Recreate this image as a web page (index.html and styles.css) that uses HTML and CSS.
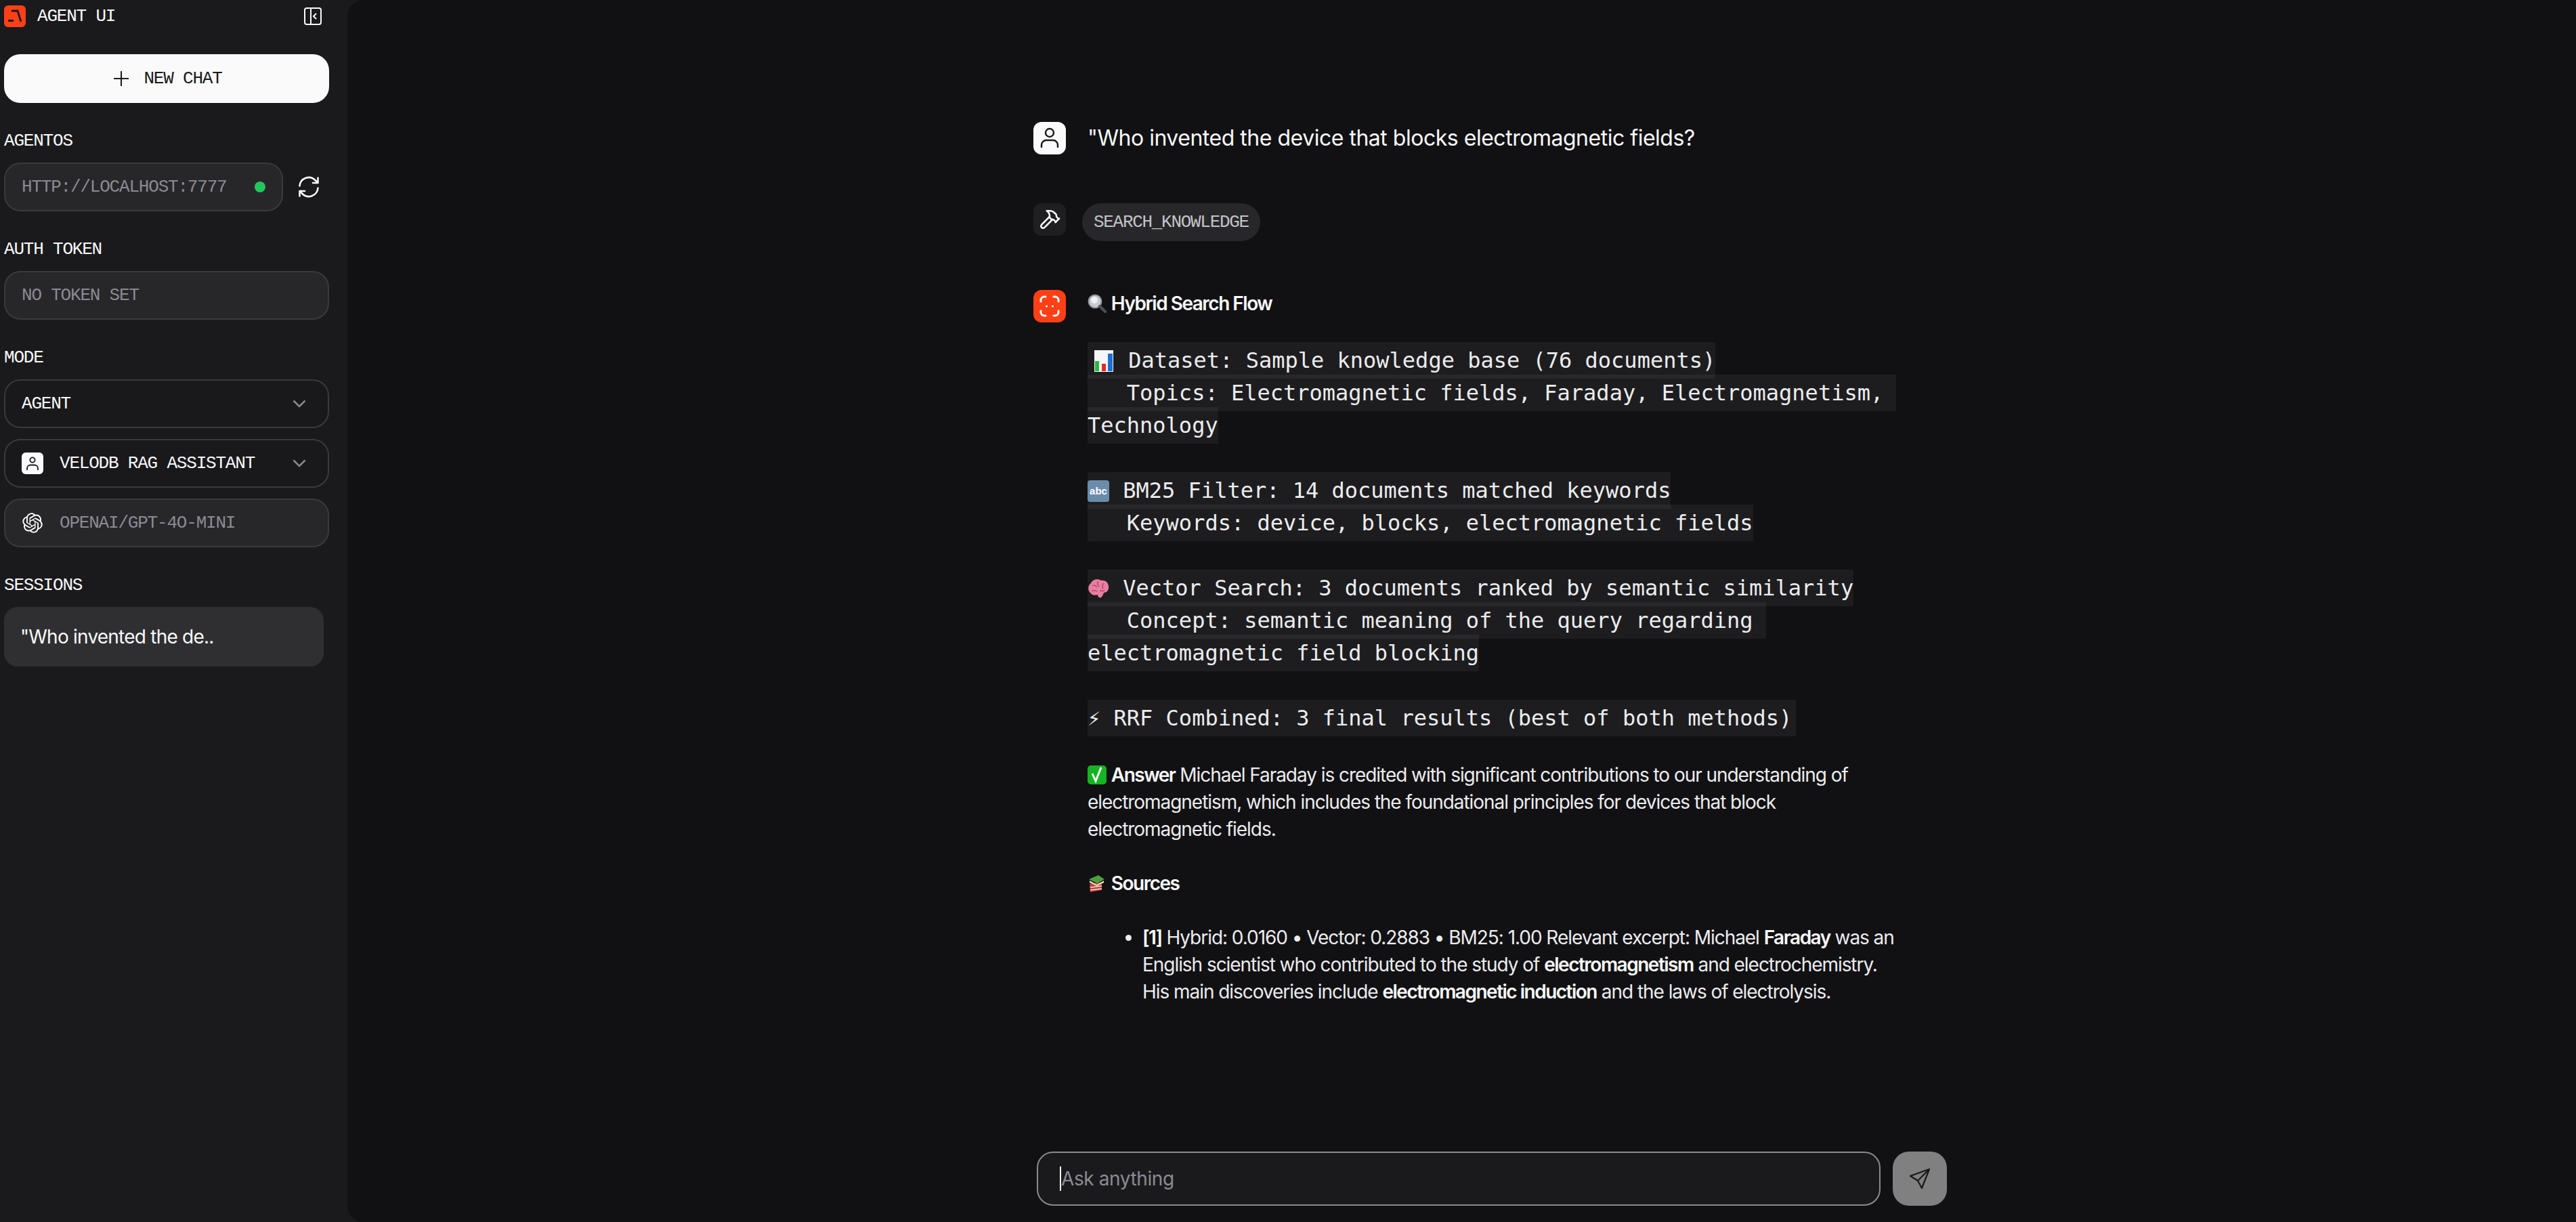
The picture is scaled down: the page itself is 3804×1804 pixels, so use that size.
FILE: index.html
```html
<!DOCTYPE html>
<html lang="en">
<head>
  <meta charset="UTF-8">
  <title>Agent UI</title>
  <link rel="stylesheet" href="styles.css">
</head>
<body>

  <!-- Sidebar -->
  <aside class="sidebar">
    <div class="brand">
      <div class="brand-name">
        <svg class="logo" viewBox="0 0 32 32"><rect width="32" height="32" rx="6" fill="#ff4017"/><path d="M6 22.500h8M11 8h9l5 16" fill="none" stroke="#19191b" stroke-width="2.800"/></svg>
        <span>AGENT UI</span>
      </div>
      <svg class="collapse" viewBox="0 0 26 26" fill="none" stroke="#fafafa" stroke-width="2"><rect x="1" y="1" width="24" height="24" rx="3"/><path d="M10 1v24M18 9l-4 4 4 4"/></svg>
    </div>

    <button class="new-chat">
      <svg viewBox="0 0 22 22" fill="none" stroke="#19191b" stroke-width="2"><path d="M11 0v22M0 11h22"/></svg>
      NEW CHAT
    </button>

    <section class="group">
      <h2>AGENTOS</h2>
      <div class="row">
        <div class="field grow">
          <span class="muted">HTTP://LOCALHOST:7777</span>
          <i class="dot"></i>
        </div>
        <svg class="refresh" viewBox="0 0 24 24" fill="none" stroke="#fafafa" stroke-width="1.700" stroke-linecap="round" stroke-linejoin="round"><path d="M3 11a9 9 0 0 1 15.500-5.500L21 8M21 3v5h-5M21 13a9 9 0 0 1-15.500 5.500L3 16M3 21v-5h5"/></svg>
      </div>
    </section>

    <section class="group">
      <h2>AUTH TOKEN</h2>
      <div class="field"><span class="muted">NO TOKEN SET</span></div>
    </section>

    <section class="group">
      <h2>MODE</h2>
      <div class="stack">
        <div class="field plain">
          <span>AGENT</span>
          <svg class="chevron" viewBox="0 0 20 12" fill="none" stroke="#8a8a8e" stroke-width="2.500"><path d="M1.500 1.500 10 10l8.500-8.500"/></svg>
        </div>
        <div class="field plain">
          <span class="with-icon">
            <svg class="mini-avatar" viewBox="0 0 32 32"><rect width="32" height="32" rx="6" fill="#fafafa"/><g fill="none" stroke="#19191b" stroke-width="1.800"><circle cx="16" cy="11" r="3.600"/><path d="M8 26v-2.500a5 5 0 0 1 5-5h6a5 5 0 0 1 5 5V26"/></g></svg>
            VELODB RAG ASSISTANT
          </span>
          <svg class="chevron" viewBox="0 0 20 12" fill="none" stroke="#8a8a8e" stroke-width="2.500"><path d="M1.500 1.500 10 10l8.500-8.500"/></svg>
        </div>
        <div class="field">
          <span class="with-icon muted">
            <svg class="mini-avatar" viewBox="-1 -1 26 26"><path fill="#fafafa" d="M22.2819 9.8211a5.9847 5.9847 0 0 0-.5157-4.9108 6.0462 6.0462 0 0 0-6.5098-2.9A6.0651 6.0651 0 0 0 4.9807 4.1818a5.9847 5.9847 0 0 0-3.9977 2.9 6.0462 6.0462 0 0 0 .7427 7.0966 5.98 5.98 0 0 0 .511 4.9107 6.051 6.051 0 0 0 6.5146 2.9001A5.9847 5.9847 0 0 0 13.2599 24a6.0557 6.0557 0 0 0 5.7718-4.2058 5.9894 5.9894 0 0 0 3.9977-2.9001 6.0557 6.0557 0 0 0-.7475-7.0729zm-9.022 12.6081a4.4755 4.4755 0 0 1-2.8764-1.0408l.1419-.0804 4.7783-2.7582a.7948.7948 0 0 0 .3927-.6813v-6.7369l2.02 1.1686a.071.071 0 0 1 .038.052v5.5826a4.504 4.504 0 0 1-4.4945 4.4944zm-9.6607-4.1254a4.4708 4.4708 0 0 1-.5346-3.0137l.142.0852 4.783 2.7582a.7712.7712 0 0 0 .7806 0l5.8428-3.3685v2.3324a.0804.0804 0 0 1-.0332.0615L9.74 19.9502a4.4992 4.4992 0 0 1-6.1408-1.6464zM2.3408 7.8956a4.485 4.485 0 0 1 2.3655-1.9728V11.6a.7664.7664 0 0 0 .3879.6765l5.8144 3.3543-2.0201 1.1685a.0757.0757 0 0 1-.071 0l-4.8303-2.7865A4.504 4.504 0 0 1 2.3408 7.872zm16.5963 3.8558L13.1038 8.364 15.1192 7.2a.0757.0757 0 0 1 .071 0l4.8303 2.7913a4.4944 4.4944 0 0 1-.6765 8.1042v-5.6772a.79.79 0 0 0-.407-.667zm2.0107-3.0231l-.142-.0852-4.7735-2.7818a.7759.7759 0 0 0-.7854 0L9.409 9.2297V6.8974a.0662.0662 0 0 1 .0284-.0615l4.8303-2.7866a4.4992 4.4992 0 0 1 6.6802 4.66zM8.3065 12.863l-2.02-1.1638a.0804.0804 0 0 1-.038-.0567V6.0742a4.4992 4.4992 0 0 1 7.3757-3.4537l-.142.0805L8.704 5.459a.7948.7948 0 0 0-.3927.6813zm1.0976-2.3654l2.602-1.4998 2.6069 1.4998v2.9994l-2.5974 1.4997-2.6067-1.4997Z"/></svg>
            OPENAI/GPT-4O-MINI
          </span>
        </div>
      </div>
    </section>

    <section class="group">
      <h2>SESSIONS</h2>
      <div class="session">"Who invented the de..</div>
    </section>
  </aside>

  <!-- Chat -->
  <main class="chat">
    <div class="messages">

      <div class="msg user-msg">
        <div class="avatar light">
          <svg viewBox="0 0 48 48" fill="none" stroke="#19191b" stroke-width="2.400"><circle cx="24" cy="16" r="6"/><path d="M12 38v-4a7 7 0 0 1 7-7h10a7 7 0 0 1 7 7v4"/></svg>
        </div>
        <p class="question">"Who invented the device that blocks electromagnetic fields?</p>
      </div>

      <div class="msg tool-msg">
        <div class="avatar tool">
          <svg viewBox="-5 -5 34 34" fill="none" stroke="#fafafa" stroke-width="1.800" stroke-linecap="round" stroke-linejoin="round"><path d="m15 12-8.373 8.373a1 1 0 1 1-3-3L12 9"/><path d="m18 15 4-4"/><path d="m21.500 11.500-1.914-1.914A2 2 0 0 1 19 8.172V7l-2.260-2.260a6 6 0 0 0-4.202-1.756L9 2.960l.920.820A6.180 6.180 0 0 1 12 8.400V10l2 2h1.172a2 2 0 0 1 1.414.586L18.500 14.500"/></svg>
        </div>
        <span class="tool-pill">SEARCH_KNOWLEDGE</span>
      </div>

      <div class="msg">
        <div class="avatar brand-bg">
          <svg viewBox="0 0 48 48" fill="none" stroke="#fafafa" stroke-width="3" stroke-linecap="round"><path d="M11 17v-2a5 5 0 0 1 5-5h2M30 10h2a5 5 0 0 1 5 5v2M37 31v2a5 5 0 0 1-5 5h-2M18 38h-2a5 5 0 0 1-5-5v-2"/><circle cx="19.500" cy="24" r="1.500" fill="#fafafa" stroke="none"/><circle cx="28.500" cy="24" r="1.500" fill="#fafafa" stroke="none"/></svg>
        </div>
        <div class="answer">
          <p>
            <svg class="emoji" viewBox="0 0 28 28"><circle cx="11" cy="11" r="9.500" fill="#c9ccd1" stroke="#8d9299" stroke-width="2"/><circle cx="10" cy="9" r="5" fill="#eef0f3"/><path d="M18 18l8 8" stroke="#4c5158" stroke-width="4" stroke-linecap="round"/></svg>
            <strong>Hybrid Search Flow</strong>
          </p>
          <p class="code-block"><code><svg class="glyph wide" viewBox="0 0 41 32"><rect x="10" y="0" width="28" height="32" fill="#f4f6f8"/><rect x="11" y="16" width="6" height="15" fill="#2fb344"/><rect x="21" y="20" width="6" height="11" fill="#e02b20"/><rect x="30" y="5" width="7" height="26" fill="#1f6fd0"/></svg> Dataset: Sample knowledge base (76 documents)
   Topics: Electromagnetic fields, Faraday, Electromagnetism, Technology</code>

<code><svg class="glyph" viewBox="0 0 33 32"><rect width="32" height="32" rx="4" fill="#6a8cab"/><text x="16" y="21" text-anchor="middle" class="abc">abc</text></svg> BM25 Filter: 14 documents matched keywords
   Keywords: device, blocks, electromagnetic fields</code>

<code><svg class="glyph" viewBox="0 0 33 32"><path d="M5 23C0 20 0 11 5 8c2-6 11-7 15-4 6-1 11 3 11 9 1 5-3 9-7 9-1 3-2 5-4 7-3 1-5-1-5-4-4 1-8 1-10-2z" fill="#e97fa0"/><path d="M7 12c3-2 6 0 7 2M16 5c-2 3-1 6 1 8M24 8c-2 2-3 5-1 8M6 19c3 0 6-1 8 1M18 19c3 0 5 1 7 0" fill="none" stroke="#b04a70" stroke-width="1.500"/></svg> Vector Search: 3 documents ranked by semantic similarity
   Concept: semantic meaning of the query regarding electromagnetic field blocking</code>

<code class="rrf">⚡ RRF Combined: 3 final results (best of both methods)</code></p>
          <p>
            <svg class="emoji" viewBox="0 0 28 28"><rect width="28" height="28" rx="5" fill="#16b322"/><path d="M7 12l5 11 8-20" fill="none" stroke="#fff" stroke-width="3"/></svg>
            <strong>Answer</strong> Michael Faraday is credited with significant contributions to our understanding of electromagnetism, which includes the foundational principles for devices that block electromagnetic fields.
          </p>
          <p>
            <svg class="emoji" viewBox="0 0 28 28"><path d="M3 15l18-3v12L4 27z" fill="#c8392f"/><path d="M4 20l17-2M4 24l17-2" stroke="#e8e8ea" stroke-width="1.500"/><path d="M2 8l14-6 9 6-11 6z" fill="#4f9e3c"/><path d="M3 10l11 6 10-6v3l-10 5-11-5z" fill="#d9e6cc"/></svg>
            <strong>Sources</strong>
          </p>
          <ul>
            <li><strong>[1]</strong> Hybrid: 0.0160 • Vector: 0.2883 • BM25: 1.00 Relevant excerpt: Michael <strong>Faraday</strong> was an English scientist who contributed to the study of <strong>electromagnetism</strong> and electrochemistry. His main discoveries include <strong>electromagnetic induction</strong> and the laws of electrolysis.</li>
          </ul>
        </div>
      </div>

    </div>

    <!-- Input -->
    <div class="composer">
      <div class="ask"><i class="caret"></i>Ask anything</div>
      <button class="send">
        <svg viewBox="0 0 32 32" fill="none" stroke="#19191b" stroke-width="2.200" stroke-linejoin="round"><path d="M30 2 2 12l11 7 6 11z"/><path d="M30 2 13 19"/></svg>
      </button>
    </div>
  </main>

</body>
</html>
```

FILE: styles.css
```css
/* RESET */
* {
  margin: 0;
  padding: 0;
  box-sizing: border-box;
}

body {
  display: flex;
  height: 100vh;
  overflow: hidden;
  background: #1a1a1c;
  color: #fafafa;
  font-family: 'Inter', sans-serif;
}

/* SIDEBAR */
.sidebar {
  width: 513px;
  flex-shrink: 0;
  padding: 8px 0 0 6px;
  display: flex;
  flex-direction: column;
  gap: 40px;
  font-family: 'Liberation Mono', monospace;
  font-size: 26px;
  letter-spacing: -1.2px;
}

.brand {
  width: 480px;
  height: 32px;
  display: flex;
  align-items: center;
  justify-content: space-between;
  padding-right: 11px;
}

.brand-name {
  display: flex;
  align-items: center;
  gap: 17px;
}

.logo {
  width: 32px;
  height: 32px;
}

.collapse {
  width: 26px;
  height: 26px;
}

.new-chat {
  width: 480px;
  height: 72px;
  display: flex;
  align-items: center;
  justify-content: center;
  gap: 22px;
  padding-left: 4px;
  border: none;
  border-radius: 24px;
  background: #fafafa;
  color: #19191b;
  font: inherit;
  letter-spacing: inherit;
}

.new-chat svg {
  width: 22px;
  height: 22px;
}

.group {
  width: 480px;
  display: flex;
  flex-direction: column;
  gap: 16px;
}

.group h2 {
  font-size: 26px;
  font-weight: 400;
  line-height: 32px;
}

.row {
  display: flex;
  align-items: center;
}

.grow {
  width: 412px;
  flex-shrink: 0;
}

.refresh {
  width: 36px;
  height: 36px;
  margin-left: 20px;
}

.field {
  height: 72px;
  display: flex;
  align-items: center;
  justify-content: space-between;
  padding: 0 24px;
  background: #27272a;
  border: 2px solid #3a3a3d;
  border-radius: 24px;
}

.field.plain {
  background: #19191b;
}

.muted {
  color: #8b8b92;
}

.dot {
  width: 16px;
  height: 16px;
  border-radius: 50%;
  background: #22c55e;
}

.stack {
  display: flex;
  flex-direction: column;
  gap: 16px;
}

.with-icon {
  display: flex;
  align-items: center;
  gap: 24px;
}

.mini-avatar {
  width: 32px;
  height: 32px;
}

.chevron {
  width: 20px;
  height: 12px;
  margin-right: 8px;
}

.session {
  width: 472px;
  height: 88px;
  display: flex;
  align-items: center;
  padding-left: 24px;
  border-radius: 20px;
  background: #2f2f32;
  font-family: 'Inter', sans-serif;
  font-size: 28px;
  letter-spacing: -0.77px;
}

/* CHAT */
.chat {
  flex: 1;
  min-width: 0;
  display: flex;
  flex-direction: column;
  background: #111113;
  border-radius: 24px 0 0 24px;
}

.messages {
  flex: 1;
  width: 1274px;
  margin-left: 1013px;
  padding-top: 180px;
  display: flex;
  flex-direction: column;
  gap: 72px;
}

.msg {
  display: flex;
  align-items: flex-start;
  gap: 32px;
}

.avatar {
  width: 48px;
  height: 48px;
  flex-shrink: 0;
  border-radius: 12px;
}

.avatar svg {
  display: block;
  width: 48px;
  height: 48px;
}

.light {
  background: #fafafa;
}

.tool {
  background: #1f1f21;
}

.brand-bg {
  background: #ff4017;
}

.question {
  font-size: 32px;
  line-height: 48px;
  letter-spacing: -0.48px;
}

.tool-msg {
  gap: 24px;
}

.tool-pill {
  height: 56px;
  display: flex;
  align-items: center;
  padding: 0 17px;
  border-radius: 28px;
  background: #27272a;
  color: #c4c4c8;
  font-family: 'Liberation Mono', monospace;
  font-size: 26px;
  letter-spacing: -1.3px;
}

.answer {
  flex: 1;
  min-width: 0;
  display: flex;
  flex-direction: column;
  gap: 40px;
  font-size: 28px;
  line-height: 40px;
  letter-spacing: -1.05px;
  color: #ececee;
}

.answer strong {
  font-weight: 600;
  letter-spacing: -1.5px;
  color: #fafafa;
}

.emoji {
  width: 28px;
  height: 28px;
  vertical-align: -4px;
}

.code-block {
  font-size: 32px;
  line-height: 48px;
  letter-spacing: 0;
  white-space: pre-wrap;
}

code {
  padding: 8px 0;
  background: rgba(255, 255, 255, 0.05);
  font-family: 'DejaVu Sans Mono', monospace;
  font-size: 32px;
}

.rrf {
  padding-right: 6px;
}

.glyph {
  width: 33px;
  height: 32px;
  vertical-align: -6px;
}

.glyph.wide {
  width: 41px;
}

.abc {
  fill: #fff;
  font-family: 'Liberation Sans', sans-serif;
  font-size: 15px;
  font-weight: 700;
}

.answer ul {
  padding-left: 81px;
}

/* INPUT */
.composer {
  width: 1344px;
  margin: 0 0 24px 1018px;
  display: flex;
  gap: 18px;
}

.ask {
  flex: 1;
  height: 80px;
  display: flex;
  align-items: center;
  padding-left: 32px;
  background: #1a1a1c;
  border: 2px solid #8a8a8a;
  border-radius: 24px;
  color: #8b8b92;
  font-size: 28px;
  letter-spacing: -0.4px;
}

.caret {
  width: 2px;
  height: 36px;
  background: #fafafa;
}

.send {
  width: 80px;
  height: 80px;
  display: flex;
  align-items: center;
  justify-content: center;
  border: none;
  border-radius: 24px;
  background: #808080;
}

.send svg {
  width: 32px;
  height: 32px;
}
```
